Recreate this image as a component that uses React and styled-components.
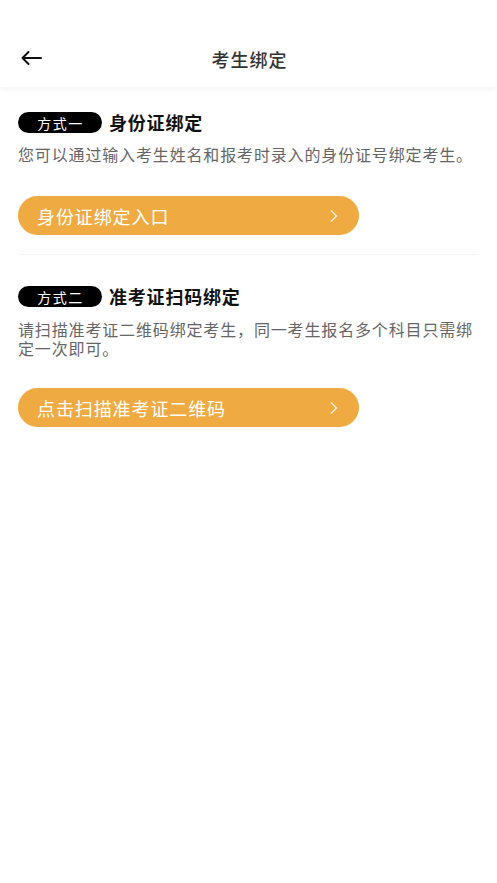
import React from "react";
import styled, { createGlobalStyle } from "styled-components";

const Global = createGlobalStyle`
  html, body { margin: 0; padding: 0; background: #fff; }
  body { font-family: "Noto Sans CJK SC", "Noto Sans", sans-serif; }
  * { box-sizing: border-box; }
`;

const Page = styled.div`
  width: 497px;
  min-height: 883px;
  background: #fff;
`;

const Header = styled.header`
  height: 87px;
  padding-top: 30px;
  display: flex;
  align-items: center;
  position: relative;
  background: #fff;
  box-shadow: 0 2px 6px rgba(0, 0, 0, 0.05);
`;

const Back = styled.button`
  border: 0;
  background: none;
  padding: 0;
  margin-left: 19px;
  width: 24px;
  height: 24px;
  display: flex;
  align-items: center;
  justify-content: center;
  margin-top: -2px;
`;

const Title = styled.h1`
  position: absolute;
  left: 0;
  right: 0;
  top: 30px;
  height: 57px;
  margin: 0;
  display: flex;
  align-items: center;
  justify-content: center;
  font-size: 18px;
  font-weight: 500;
  letter-spacing: 1px;
  color: #333;
  pointer-events: none;
  padding-left: 2px;
  padding-top: 1px;
`;

const Section = styled.section`
  padding: ${(p) => p.$top}px 20px 0 18px;
`;

const HeadRow = styled.div`
  display: flex;
  align-items: center;
  gap: 7px;
  height: 21px;
`;

const Badge = styled.span`
  width: 84px;
  height: 21px;
  border-radius: 11px;
  background: #000;
  color: #fff;
  font-size: 14px;
  letter-spacing: 1.5px;
  display: flex;
  align-items: center;
  justify-content: center;
  line-height: 1;
  padding-left: 1px;
`;

const SectionTitle = styled.h2`
  margin: 0;
  font-size: 18px;
  font-weight: 700;
  letter-spacing: 0.8px;
  color: #111;
  line-height: 21px;
`;

const Desc = styled.p`
  margin: ${(p) => p.$mt}px 0 0;
  font-size: 16px;
  line-height: 19px;
  letter-spacing: 0.85px;
  color: #666;
`;

const ActionButton = styled.button`
  margin-top: ${(p) => p.$mt}px;
  width: 341px;
  height: 39px;
  border: 0;
  border-radius: 20px;
  background: #efab42;
  color: #fff;
  display: flex;
  align-items: center;
  justify-content: space-between;
  padding: 0 20px 0 19px;
  font-family: inherit;
  font-size: 18px;
  letter-spacing: 0.9px;
  cursor: pointer;
`;

const Divider = styled.hr`
  border: 0;
  height: 1px;
  background: #f2f2f2;
  margin: 19px 19px 0 20px;
`;

const Chevron = () => (
  <svg width="10" height="14" viewBox="0 0 10 14" fill="none">
    <path d="M2 1.5 L7.5 7 L2 12.5" stroke="rgba(255,255,255,0.85)" strokeWidth="1.3" />
  </svg>
);

export default function App() {
  return (
    <Page>
      <Global />
      <Header>
        <Back aria-label="back">
          <svg width="22" height="16" viewBox="0 0 22 16" fill="none">
            <path d="M21 8 H2.5 M8.5 2 L2.5 8 L8.5 14" stroke="#111" strokeWidth="2" strokeLinecap="round" strokeLinejoin="round" />
          </svg>
        </Back>
        <Title>考生绑定</Title>
      </Header>

      <Section $top={25}>
        <HeadRow>
          <Badge>方式一</Badge>
          <SectionTitle>身份证绑定</SectionTitle>
        </HeadRow>
        <Desc $mt={12}>您可以通过输入考生姓名和报考时录入的身份证号绑定考生。</Desc>
        <ActionButton $mt={32}>
          <span>身份证绑定入口</span>
          <Chevron />
        </ActionButton>
      </Section>

      <Divider />

      <Section $top={31}>
        <HeadRow>
          <Badge>方式二</Badge>
          <SectionTitle>准考证扫码绑定</SectionTitle>
        </HeadRow>
        <Desc $mt={13}>
          请扫描准考证二维码绑定考生，同一考生报名多个科目只需绑定一次即可。
        </Desc>
        <ActionButton $mt={30}>
          <span>点击扫描准考证二维码</span>
          <Chevron />
        </ActionButton>
      </Section>
    </Page>
  );
}
